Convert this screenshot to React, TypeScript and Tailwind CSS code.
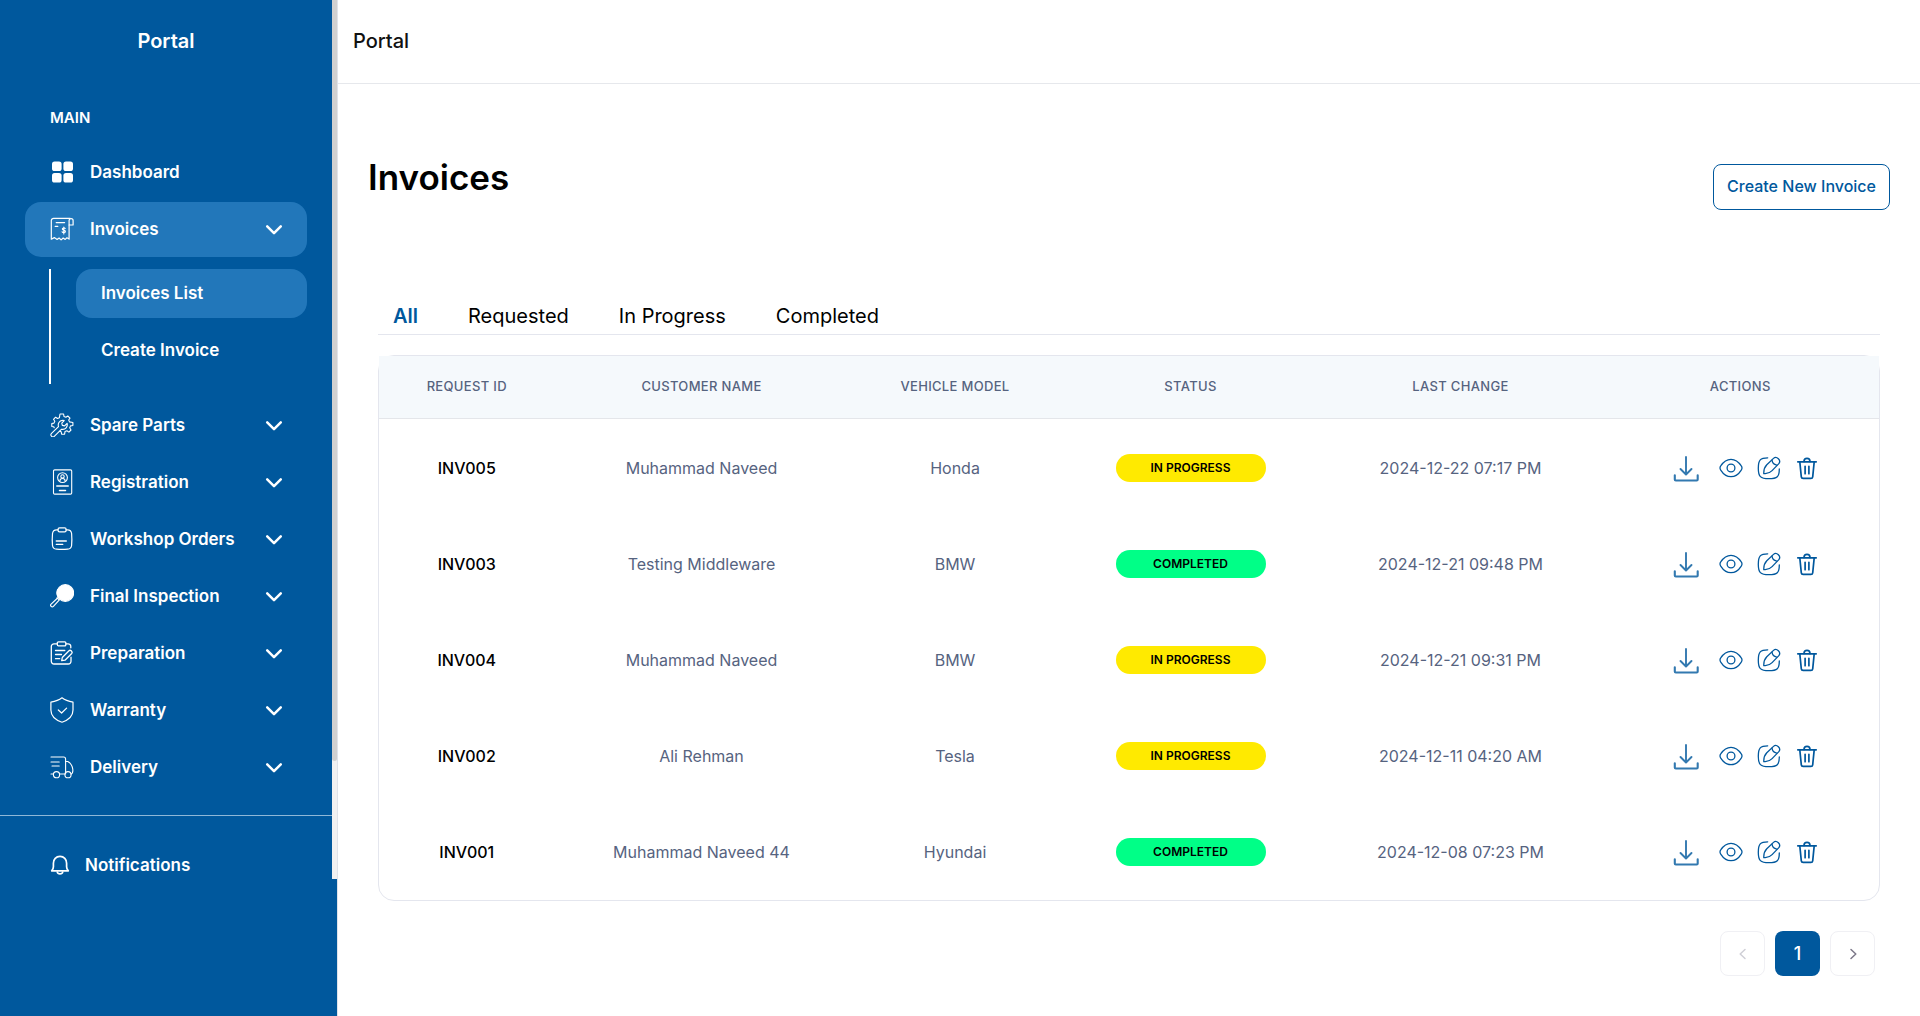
import React, { useState } from "react";

const line = {
  fill: "none",
  stroke: "currentColor",
  strokeLinecap: "round" as const,
  strokeLinejoin: "round" as const,
};

function GridIcon() {
  return (
    <svg className="size-6" viewBox="0 0 24 24" fill="currentColor" aria-hidden="true">
      <rect x="2" y="1.5" width="9.6" height="9.6" rx="2.6" />
      <rect x="13.4" y="1.5" width="9.6" height="9.6" rx="2.6" />
      <rect x="2" y="12.9" width="9.6" height="9.6" rx="2.6" />
      <rect x="13.4" y="12.9" width="9.6" height="9.6" rx="2.6" />
    </svg>
  );
}

function InvoiceIcon() {
  return (
    <svg className="size-6" viewBox="0 0 24 24" {...line} strokeWidth="1.2" aria-hidden="true">
      <path d="M20.2 1.3H3.6A2.3 2.3 0 0 0 1.3 3.6v18.6l3-1.6 2.8 1.8 2-1.4 2 1.9 2.1-1.9 2 1.4 1.7-1.6 2.2 1.3V8" />
      <path d="M19.1 8V3.6a2 2 0 0 1 4 0V8h-4" />
      <path d="M6.2 5.6h8.4M5.2 9.4h2.6" />
      <path d="M15.2 11.5c-.6-.8-2.9-.9-2.9.5 0 1.6 3.1.7 3.1 2.4 0 1.3-2.5 1.4-3.3.4M13.8 10v7" strokeWidth="1.1" />
    </svg>
  );
}

function PartsIcon() {
  return (
    <svg className="size-6" viewBox="0 0 24 24" {...line} strokeWidth="1.1" aria-hidden="true">
      <path d="M4.2 14.7 3.8 13.8 1.8 13.5v-3l2.2-.4.8-1.9-1.3-1.9 2.1-2.1 1.9 1.3 1.9-.8L10 1h3.6l.4 2.5 1.9.8 1.9-1.3 2.2 2.1-1.3 1.9.8 1.9 3.4.6v3l-2.4.4-.8 1.9 1.3 2.2-2.1 2.1-2-1.3-1.9.8-.4 2.6h-3l-.4-2.4-1.5-.6" />
      <path d="m1.5 20.4 7-6.8c-.9-2.8.8-5.9 3.8-6.2.8-.1 1.3 0 1.9.2l-2.4 2.5.5 2.3 2.3.5 2.5-2.5c.9 3.2-1.6 6.6-5.5 5.8l-7.1 7a2 2 0 0 1-3-2.8Z" />
    </svg>
  );
}

function RegistrationIcon() {
  return (
    <svg className="h-[26px] w-6" viewBox="0 0 24 26" {...line} strokeWidth="1.1" aria-hidden="true">
      <rect x="3.5" y=".9" width="18.2" height="24.2" rx="1.2" />
      <circle cx="12.5" cy="8.6" r="4.9" />
      <circle cx="12.5" cy="7.4" r="1.7" />
      <path d="M9.8 12.2c.2-3.6 5.2-3.6 5.4 0" />
      <path d="M6.8 16.9h11.4M9.5 21.6h6" strokeWidth="1.5" />
    </svg>
  );
}

function OrdersIcon() {
  return (
    <svg className="size-6" viewBox="0 0 24 24" {...line} strokeWidth="1.2" aria-hidden="true">
      <path d="M8.2 2.8H6.7a4.2 4.2 0 0 0-4.2 3.7 66 66 0 0 0 0 12 4.2 4.2 0 0 0 3.9 3.7c3.7.3 7.6.3 11.3 0a4.2 4.2 0 0 0 3.9-3.7 66 66 0 0 0 0-12 4.2 4.2 0 0 0-4.2-3.7h-1.6" />
      <rect x="8" y=".8" width="8.2" height="4" rx="1.6" />
      <path d="M6.3 14h10" strokeWidth="1.4" />
      <path d="M6.3 17.4h6.5" />
    </svg>
  );
}

function InspectionIcon() {
  return (
    <svg className="size-6" viewBox="0 0 24 24" {...line} strokeWidth="1.2" aria-hidden="true">
      <circle cx="15.3" cy="9" r="8.3" fill="currentColor" />
      <path d="m9.6 15.6-6.2 6.8a1.6 1.6 0 0 1-2.3-2.3l6.8-6.3" />
      <path d="M8.6 15.4 7 13.9" />
      <path d="M8 5.5c-1.6 3.4-.8 6.4 1 8.4" />
    </svg>
  );
}

function PreparationIcon() {
  return (
    <svg className="size-6" viewBox="0 0 24 24" {...line} strokeWidth="1.3" aria-hidden="true">
      <path d="M7.3 2.8H4a2.7 2.7 0 0 0-2.7 2.7V20.3A2.7 2.7 0 0 0 4 23h14.3a2.7 2.7 0 0 0 2.7-2.7v-4.1M15.8 2.8H18a2.7 2.7 0 0 1 2.8 2.7v1.3" />
      <rect x="7.3" y=".8" width="8.6" height="4" rx="1.2" />
      <path d="M5.5 9.5h9.3M5.5 13.5h6M5.5 17.7h4.2" />
      <path d="m12.3 16.5 6.7-6.7c1.4-1.4 4.2 1 2.7 2.7L15 19.2l-3.3.5.6-3.2Z" />
    </svg>
  );
}

function WarrantyIcon() {
  return (
    <svg className="h-[26px] w-6" viewBox="0 0 24 26" {...line} strokeWidth="1.2" aria-hidden="true">
      <path d="M12 .8c3.2 2.5 6.6 3.6 11 4.4v7.7c0 5.8-4.6 10-11 12.3C5.6 22.9.9 18.7.9 12.9V5.2C5.3 4.4 8.8 3.3 12 .8Z" />
      <path d="m8.3 13 3.3 3 5-4.9" />
    </svg>
  );
}

function DeliveryIcon() {
  return (
    <svg className="size-6" viewBox="0 0 24 24" {...line} strokeWidth="1.1" aria-hidden="true">
      <path d="M1 2h12.6a2 2 0 0 1 2 2v15M1 7h8.2M2 11h7.2M1 19h2.4M9.5 19h5" />
      <path d="M15.6 6.5h2.2c2.5 1.4 4.6 4.4 5 7.9.2 2-.1 4.2-1.8 4.7" />
      <circle cx="6.5" cy="19.7" r="3.1" />
      <circle cx="18" cy="19.7" r="3.1" />
    </svg>
  );
}

function BellIcon() {
  return (
    <svg className="size-5" viewBox="0 0 20 20" {...line} strokeWidth="1.7" aria-hidden="true">
      <path d="M1.7 15.8h16.6c-1.4-1.5-1.7-2.6-1.7-4V8.2C16.600 4.400 14 1.400 10 1.400S3.400 4.400 3.400 8.200v3.600c0 1.400-.3 2.500-1.700 4Z" />
      <path d="M7.3 17.2c.4 2.2 5 2.2 5.4 0" />
    </svg>
  );
}

function ChevronDown() {
  return (
    <svg className="h-3 w-[18px]" viewBox="0 0 18 12" {...line} strokeWidth="2.5" aria-hidden="true">
      <path d="m2.2 2.4 6.8 6.8 6.8-6.8" />
    </svg>
  );
}

function DownloadIcon() {
  return (
    <svg className="h-[26px] w-6.5" viewBox="0 0 26 26" {...line} strokeWidth="1.9" aria-hidden="true">
      <path d="M13 1v17M7.5 13l5.5 5.500L18.500 13" />
      <path d="M1.8 19.3v4.2q0 1 1 1h20.900q1 0 1-1v-4.200" strokeWidth="2.1" />
    </svg>
  );
}

function EyeIcon() {
  return (
    <svg className="size-6" viewBox="0 0 24 24" {...line} strokeWidth="1.3" aria-hidden="true">
      <path d="M1.9 14.3C1.2 13.4 1 12.8 1 12s.2-1.4.9-2.3C3.5 7.2 7.2 3.3 12 3.3s8.5 3.900 10.100 6.400c.7.900.9 1.500.9 2.300s-.2 1.400-.9 2.300c-1.600 2.500-5.300 6.400-10.100 6.400S3.500 16.800 1.900 14.300Z" />
      <circle cx="12" cy="12" r="3.9" />
    </svg>
  );
}

function EditIcon() {
  return (
    <svg className="size-6" viewBox="0 0 24 24" {...line} strokeWidth="1.3" aria-hidden="true">
      <path d="M10.7 1.8C3.4 1.8 1.3 3.8 1.3 12.2S3.4 22.7 11.9 22.7s10.4-2.1 10.4-9.7" />
      <path d="m9.8 8.8 6.7-6.4c3-2.9 8.3 2 5.1 5.5l-6.5 6.7c-2.1 2.1-5 3.5-8.3 3-.2-3.400.8-6.500 3-8.800Z" />
      <path d="M15 4.2c.3 2.5 2.1 4.4 4.7 4.9" />
    </svg>
  );
}

function TrashIcon() {
  return (
    <svg className="size-6" viewBox="0 0 24 24" {...line} strokeWidth="1.7" aria-hidden="true">
      <path d="M2.8 5.8h18.4M4.8 5.8l1.5 15a1.8 1.8 0 0 0 1.8 1.6h7.8a1.8 1.8 0 0 0 1.8-1.6l1.5-15" />
      <path d="M9 5.4c0-1.8 1.2-3 3-3s3 1.2 3 3" />
      <path d="M10.1 10.3v7.4M13.9 10.3v7.4" />
    </svg>
  );
}

const navItems = [
  { label: "Dashboard", Icon: GridIcon },
  { label: "Invoices", Icon: InvoiceIcon, active: true },
  { label: "Spare Parts", Icon: PartsIcon },
  { label: "Registration", Icon: RegistrationIcon },
  { label: "Workshop Orders", Icon: OrdersIcon },
  { label: "Final Inspection", Icon: InspectionIcon },
  { label: "Preparation", Icon: PreparationIcon },
  { label: "Warranty", Icon: WarrantyIcon },
  { label: "Delivery", Icon: DeliveryIcon },
];

const tabs = ["All", "Requested", "In Progress", "Completed"];

const invoices = [
  { id: "INV005", customer: "Muhammad Naveed", vehicle: "Honda", status: "IN PROGRESS", changed: "2024-12-22 07:17 PM" },
  { id: "INV003", customer: "Testing Middleware", vehicle: "BMW", status: "COMPLETED", changed: "2024-12-21 09:48 PM" },
  { id: "INV004", customer: "Muhammad Naveed", vehicle: "BMW", status: "IN PROGRESS", changed: "2024-12-21 09:31 PM" },
  { id: "INV002", customer: "Ali Rehman", vehicle: "Tesla", status: "IN PROGRESS", changed: "2024-12-11 04:20 AM" },
  { id: "INV001", customer: "Muhammad Naveed 44", vehicle: "Hyundai", status: "COMPLETED", changed: "2024-12-08 07:23 PM" },
];

const columns = [
  { label: "REQUEST ID", width: "w-[11.7%]" },
  { label: "CUSTOMER NAME", width: "w-[19.6%]" },
  { label: "VEHICLE MODEL", width: "w-[14.2%]" },
  { label: "STATUS", width: "w-[17.2%]" },
  { label: "LAST CHANGE", width: "w-[18.8%]" },
  { label: "ACTIONS", width: "w-[18.5%]" },
];

function Sidebar() {
  return (
    <aside className="w-[338px] shrink-0 border-r border-[#dfe3ea] bg-[#00589d] text-white">
      <div className="flex">
        <nav className="h-[879px] min-w-0 flex-1 overflow-hidden">
          <p className="pt-[27px] text-center text-[20px] leading-7 font-semibold">Portal</p>
          <p className="mt-[51px] pl-[50px] text-[15px] leading-6 font-semibold">MAIN</p>
          <ul className="mt-[15px] flex flex-col gap-0.5 px-[25px]">
            {navItems.map(({ label, Icon, active }) => (
              <li key={label}>
                <button
                  type="button"
                  className={
                    active
                      ? "flex h-[55px] w-full items-center rounded-2xl bg-[#2277ba] pr-6 pb-px pl-[25px]"
                      : "flex h-[55px] w-full items-center rounded-2xl pr-6 pb-px pl-[25px]"
                  }
                >
                  <Icon />
                  <span className="ml-4 text-[17px] leading-6 font-semibold">{label}</span>
                  {label !== "Dashboard" && (
                    <span className="ml-auto pt-0.5">
                      <ChevronDown />
                    </span>
                  )}
                </button>
                {active && (
                  <ul className="mt-3 mb-3 ml-6 flex h-[115px] flex-col gap-2 border-l-2 border-white pl-[25px]">
                    <li>
                      <a href="#list" className="flex h-[49px] items-center rounded-2xl bg-[#2277ba] pb-px pl-[25px] text-[17px] leading-6 font-semibold">
                        Invoices List
                      </a>
                    </li>
                    <li>
                      <a href="#create" className="flex h-[49px] items-center rounded-2xl pb-px pl-[25px] text-[17px] leading-6 font-semibold">
                        Create Invoice
                      </a>
                    </li>
                  </ul>
                )}
              </li>
            ))}
          </ul>
          <div className="mt-5 border-t border-[#8fb8d8]" />
          <button type="button" className="mt-[21px] flex h-[55px] items-center pl-[50px]">
            <BellIcon />
            <span className="ml-[15px] text-[17px] leading-6 font-semibold">Notifications</span>
          </button>
        </nav>
        <div className="w-[5px] bg-[#f1f1f1]">
          <div className="h-[761px] rounded-b-sm bg-[#d0d0d0]" />
        </div>
      </div>
    </aside>
  );
}

export default function App() {
  const [tab, setTab] = useState("All");
  return (
    <div className="flex min-h-screen bg-white font-['Inter',sans-serif] text-black">
      <Sidebar />
      <div className="min-w-0 flex-1">
        <header className="flex h-[84px] items-start border-b border-[#e6e8ec] px-[15px] pt-[27px]">
          <p className="text-[20px] leading-7 font-medium text-[#111]">Portal</p>
        </header>
        <main className="px-[30px] pt-[69px]">
          <div className="flex items-start justify-between">
            <h1 className="text-[35px] leading-12 font-semibold">Invoices</h1>
            <button type="button" className="mt-[11px] flex h-[46px] items-center rounded-lg border border-[#00589d] px-[13px] pb-0.5 text-[16px] leading-6 font-medium text-[#00589d]">
              Create New Invoice
            </button>
          </div>
          <section className="mt-[90px] px-2.5">
            <div role="tablist" className="flex h-[35px] items-start gap-[50px] border-b border-[#e4e6ee] pl-[15px]">
              {tabs.map((t) => (
                <button
                  key={t}
                  type="button"
                  role="tab"
                  aria-selected={t === tab}
                  onClick={() => setTab(t)}
                  className={
                    t === tab
                      ? "text-[20px] leading-8 font-semibold text-[#00589d]"
                      : "text-[20px] leading-8 font-normal"
                  }
                >
                  {t}
                </button>
              ))}
            </div>
            <div className="mt-5 rounded-2xl border border-[#e4e6ee] pb-0.5">
              <table className="w-full table-fixed border-collapse text-center">
                <thead>
                  <tr className="h-[62px] border-b border-[#e4e6ea] bg-[#f5f9fc]">
                    {columns.map((c) => (
                      <th key={c.label} scope="col" className={`${c.width} p-0 pb-0.5 text-[13px] leading-5 font-medium tracking-wide text-[#56637f]`}>
                        {c.label}
                      </th>
                    ))}
                  </tr>
                </thead>
                <tbody>
                  {invoices.map((row) => (
                    <tr key={row.id} className="h-24 text-[16px] leading-6 text-[#56637f]">
                      <td className="pt-[3px] font-medium text-black">{row.id}</td>
                      <td className="pt-[3px]">{row.customer}</td>
                      <td className="pt-[3px]">{row.vehicle}</td>
                      <td className="pt-[3px]">
                        <span
                          className={
                            row.status === "COMPLETED"
                              ? "mx-auto flex h-7 w-[150px] items-center justify-center rounded-full bg-[#00ff87] text-[12px] leading-4 font-semibold text-black"
                              : "mx-auto flex h-7 w-[150px] items-center justify-center rounded-full bg-[#ffea00] text-[12px] leading-4 font-semibold text-black"
                          }
                        >
                          {row.status}
                        </span>
                      </td>
                      <td className="pt-[3px]">{row.changed}</td>
                      <td className="pt-[3px] pl-3">
                        <div className="flex items-center justify-center gap-3.5 text-[#00589d]">
                          <button type="button" aria-label={`Download ${row.id}`} className="mr-1.5 pt-0.5 opacity-80">
                            <DownloadIcon />
                          </button>
                          <button type="button" aria-label={`View ${row.id}`}>
                            <EyeIcon />
                          </button>
                          <button type="button" aria-label={`Edit ${row.id}`}>
                            <EditIcon />
                          </button>
                          <button type="button" aria-label={`Delete ${row.id}`}>
                            <TrashIcon />
                          </button>
                        </div>
                      </td>
                    </tr>
                  ))}
                </tbody>
              </table>
            </div>
            <nav aria-label="Pagination" className="mt-[30px] flex justify-end gap-2.5 pr-[5px]">
              <button type="button" disabled aria-label="Previous page" className="flex size-[45px] items-center justify-center rounded-lg border border-[#f0f0f4] text-[#cfcfd6]">
                <svg className="size-3" viewBox="0 0 12 12" {...line} strokeWidth="1.5" aria-hidden="true">
                  <path d="M8 1.5 3.2 6 8 10.5" />
                </svg>
              </button>
              <button type="button" aria-current="page" className="flex size-[45px] items-center justify-center rounded-lg bg-[#00589d] text-[18px] leading-6 font-medium text-white">
                1
              </button>
              <button type="button" aria-label="Next page" className="flex size-[45px] items-center justify-center rounded-lg border border-[#f0f0f4] text-[#7c7889]">
                <svg className="size-3" viewBox="0 0 12 12" {...line} strokeWidth="1.5" aria-hidden="true">
                  <path d="M4 1.5 8.8 6 4 10.5" />
                </svg>
              </button>
            </nav>
          </section>
        </main>
      </div>
    </div>
  );
}
